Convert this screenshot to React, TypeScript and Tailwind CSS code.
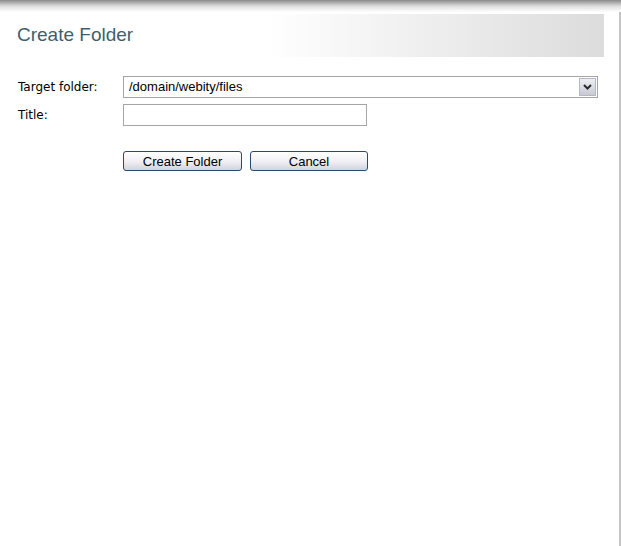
import React, { useState } from 'react';

const App: React.FC = () => {
  const [folder, setFolder] = useState('/domain/webity/files');
  const [title, setTitle] = useState('');

  return (
    <div className="h-[546px] w-[621px] bg-white overflow-hidden flex flex-col">
      {/* top shadow */}
      <div className="h-[12px] shrink-0 bg-gradient-to-b from-[#8a8a8a] via-[#dcdcdc] to-white" />

      <div className="flex flex-1 min-h-0">
        <div className="flex-1 flex flex-col">
          {/* Header */}
          <div className="mt-[2px] h-[43px] w-[604px] bg-[linear-gradient(to_right,#ffffff_0px,#ffffff_265px,#dcdcdc_604px)] flex items-center pl-[17px]">
            <h1 className="text-[19px] leading-none text-[#3f5f6c] font-['Liberation_Sans',Arial,sans-serif] pb-[2px]">
              Create Folder
            </h1>
          </div>

          {/* Form */}
          <div className="mt-[19px] flex flex-col font-['DejaVu_Sans',Verdana,sans-serif] text-[12px] text-black">
            <div className="flex items-center h-[22px]">
              <label className="w-[123px] pl-[18px]">Target folder:</label>
              <div className="relative w-[475px] h-[22px] border border-[#a5a5a5] bg-white">
                <select
                  value={folder}
                  onChange={(e) => setFolder(e.target.value)}
                  className="appearance-none w-full h-full pl-[5px] pr-[20px] bg-transparent outline-none text-[13px] font-['Liberation_Sans',Arial,sans-serif] text-black"
                >
                  <option value="/domain/webity/files">/domain/webity/files</option>
                </select>
                <div className="pointer-events-none absolute right-[1px] top-[1px] w-[17px] h-[18px] border border-[#b7b7c4] bg-gradient-to-b from-[#eeeef3] to-[#c9c9d6] flex items-center justify-center">
                  <svg width="9" height="6" viewBox="0 0 9 6">
                    <path d="M1 1 L4.5 4.5 L8 1" stroke="#2b2b2b" strokeWidth="2" fill="none" />
                  </svg>
                </div>
              </div>
            </div>

            <div className="flex items-center h-[22px] mt-[6px]">
              <label className="w-[123px] pl-[18px]">Title:</label>
              <input
                type="text"
                value={title}
                onChange={(e) => setTitle(e.target.value)}
                className="w-[244px] h-[22px] border border-[#a5a5a5] bg-white px-[4px] outline-none text-[13px] font-['Liberation_Sans',Arial,sans-serif]"
              />
            </div>

            <div className="flex gap-[8px] pl-[123px] mt-[25px]">
              <button className="w-[119px] h-[20px] rounded-[3px] border border-[#2c4a68] bg-gradient-to-b from-white via-[#f1f1f5] to-[#d3d3de] text-[13px] leading-none font-['Liberation_Sans',Arial,sans-serif] text-black">
                Create Folder
              </button>
              <button className="w-[118px] h-[20px] rounded-[3px] border border-[#2c4a68] bg-gradient-to-b from-white via-[#f1f1f5] to-[#d3d3de] text-[13px] leading-none font-['Liberation_Sans',Arial,sans-serif] text-black">
                Cancel
              </button>
            </div>
          </div>
        </div>

        {/* right edge */}
        <div className="w-[2px] shrink-0 bg-[#c4c4c4]" />
      </div>
    </div>
  );
};

export default App;
